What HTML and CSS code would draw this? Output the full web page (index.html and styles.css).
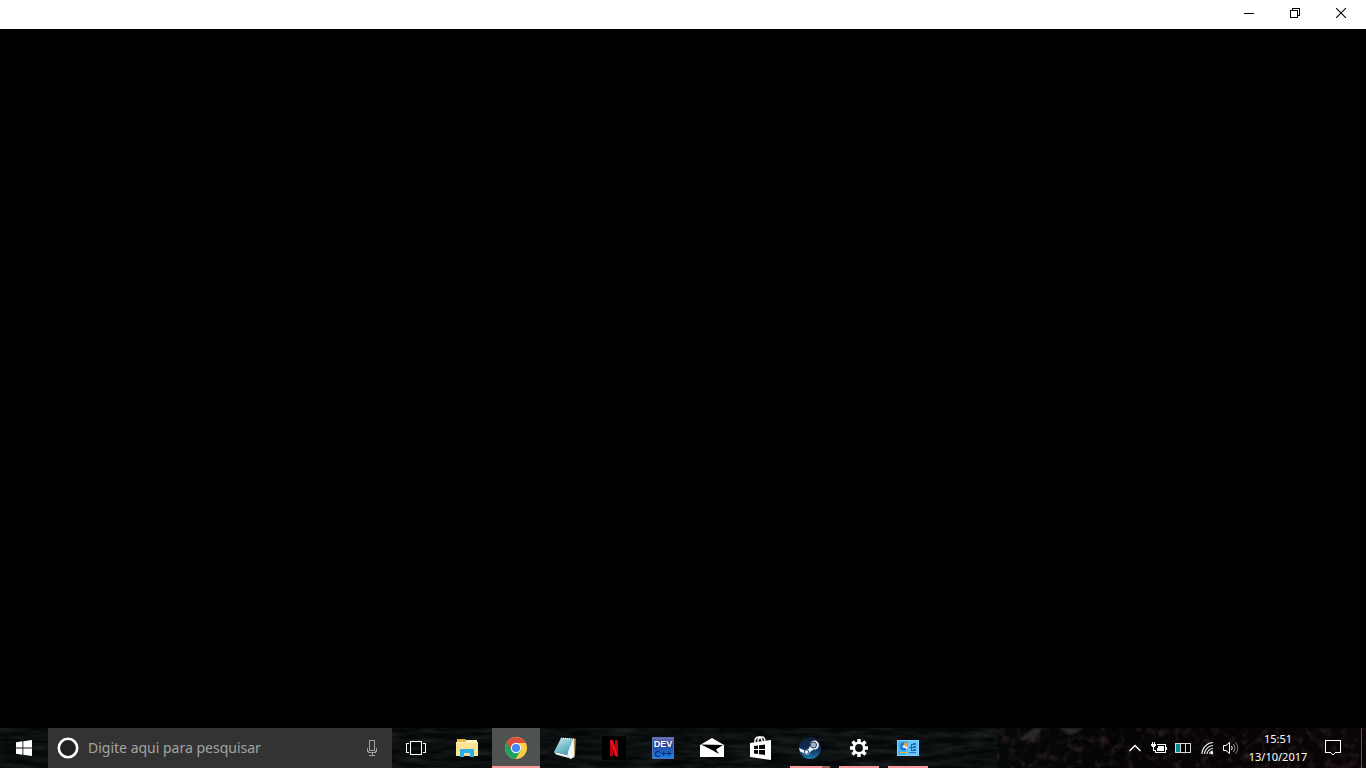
FILE: index.html
```html
<!DOCTYPE html>
<html lang="pt-BR">
<head>
<meta charset="utf-8">
<meta name="viewport" content="width=device-width, initial-scale=1">
<title>Desktop</title>
<link rel="stylesheet" href="styles.css">
</head>
<body>
<header class="titlebar">
  <button class="caption" aria-label="Minimizar"><svg class="px" width="10" height="10" viewBox="0 0 10 10"><path d="M0 5.500H10" stroke="#000"/></svg></button>
  <button class="caption" aria-label="Restaurar"><svg class="px" width="10" height="10" viewBox="0 0 10 10"><path d="M.5 2.500H7.500V9.500H.5ZM2.500 2.500V.5H9.500V7.500H7.500" fill="none" stroke="#000"/></svg></button>
  <button class="caption" aria-label="Fechar"><svg width="10" height="10" viewBox="0 0 10 10"><path d="M0 0L10 10M10 0L0 10" stroke="#000" stroke-width="1.100"/></svg></button>
</header>
<main class="content"></main>
<footer class="taskbar">
  <svg class="texture" width="100%" height="100%" preserveAspectRatio="none" aria-hidden="true">
    <defs>
      <filter id="waves" x="0" y="0" width="100%" height="100%" color-interpolation-filters="sRGB"><feTurbulence type="fractalNoise" baseFrequency=".03 .18" numOctaves="3" seed="4"/><feColorMatrix values="0 0 0 0 .11  0 0 0 0 .13  0 0 0 0 .13  1.800 0 0 0 -.6"/></filter>
      <filter id="leaves" x="0" y="0" width="100%" height="100%" color-interpolation-filters="sRGB"><feTurbulence type="fractalNoise" baseFrequency=".12" numOctaves="3" seed="8"/><feColorMatrix values="0 0 0 0 .2  0 0 0 0 .14  0 0 0 0 .14  2 0 0 0 -1"/></filter>
      <filter id="soft"><feGaussianBlur stdDeviation="1"/></filter>
    </defs>
    <rect width="73%" height="100%" filter="url(#waves)"/>
    <rect x="73%" width="27%" height="100%" filter="url(#leaves)"/>
    <path d="M1020 10L1026 6L1034 0H1042L1039 6L1036 10L1034 16L1029 11L1022 13ZM1058 0H1083L1078 4L1070 7Z" fill="#292727" filter="url(#soft)"/>
  </svg>
  <button class="start" aria-label="Iniciar"><svg width="16" height="16" viewBox="0 0 16 16" fill="#fff"><path d="M0 2.200L6.500 1.300V7.500H0ZM7.300 1.200L16 0V7.500H7.300ZM0 8.400H6.500V14.700L0 13.800ZM7.300 8.400H16V16L7.300 14.800Z"/></svg></button>
  <div class="search">
    <svg width="22" height="22" viewBox="0 0 22 22"><circle cx="11" cy="11" r="9.200" fill="#222" stroke="#fff" stroke-width="2.600"/></svg>
    <input class="query" type="text" aria-label="Pesquisar" placeholder="Digite aqui para pesquisar">
    <button class="mic" aria-label="Microfone"><svg class="px" width="12" height="16" viewBox="0 0 12 16" fill="none" stroke="#a0a0a0"><path d="M3.500.5H8.500V10.500H3.500ZM1.500 8V11.500H2.500V12.500H9.500V11.500H10.500V8M6 12.500V15.500M3 15.500H9"/></svg></button>
  </div>
  <button class="taskview" aria-label="Visão de tarefas"><svg class="px" width="20" height="14" viewBox="0 0 20 14" fill="none" stroke="#fff"><path d="M4.500.5H15.500V13.500H4.500ZM3 2.500H.5V11.500H3M17 2.500H19.500V11.500H17"/></svg></button>
  <nav class="apps">
    <button class="app" aria-label="Explorador de Arquivos"><svg width="22" height="20" viewBox="0 0 22 20"><path d="M1 1H9L11 3H21V7H1Z" fill="#e8bd56"/><path d="M2 1H8V2H2Z" fill="#f8a900"/><path d="M10 2H21V4H10Z" fill="#fff3c4"/><path d="M0 4H22V18H0Z" fill="#fbe394"/><path d="M0 4H22V5H0Z" fill="#fff0b4"/><path d="M4 12Q4 11 5 11H17Q18 11 18 12V19H14V15H8V19H4Z" fill="#2bade8"/><path d="M8 15H14V18H8Z" fill="#f5dca0"/></svg></button>
    <button class="app active" aria-label="Google Chrome"><svg width="22" height="22" viewBox="0 0 22 22"><circle cx="11" cy="11" r="11" fill="#ffcd42"/><path d="M11 11L1.500 5.500A11 11 0 0 0 10.500 22L16 13Z" fill="#1da261"/><path d="M1.500 5.500A11 11 0 0 1 20.600 6H11L6.500 13Z" fill="#de4c3f"/><circle cx="11" cy="11" r="5.200" fill="#f4f4f4"/><circle cx="11" cy="11" r="4.100" fill="#4688f4"/></svg></button>
    <button class="app" aria-label="Bloco de Notas"><svg width="24" height="22" viewBox="0 0 24 22"><defs><linearGradient id="pad" x1=".2" x2=".8" y2="1"><stop stop-color="#c5e5ea"/><stop offset=".5" stop-color="#7cc0cc"/><stop offset="1" stop-color="#3e9bb0"/></linearGradient></defs><path d="M21 1L23 2L22 18L19 21Z" fill="#a87b3c"/><path d="M9 1L21 2L21.500 20L17 22Z" fill="#dfe9eb"/><path d="M8 1L20 2L14 18L1 15Z" fill="url(#pad)"/><path d="M1 15L14 18L18 21.500L3 17.500Z" fill="#eef8fa"/><path d="M20 3L14 18L18 22L21 19Z" fill="#f0f5f6"/><path d="M8 1L21 2" stroke="#fff" stroke-dasharray="1 1"/></svg></button>
    <button class="app" aria-label="Netflix"><svg width="24" height="24" viewBox="0 0 24 24"><path d="M0 0H24V24H0Z" fill="#000"/><path d="M8 4H11V20L8 20.500ZM13 4H16V20.500L13 20Z" fill="#b20710"/><path d="M8 4H11L16 20.500L13 20Z" fill="#f20c18"/></svg></button>
    <button class="app" aria-label="Dev-C++"><svg width="22" height="22" viewBox="0 0 22 22"><defs><linearGradient id="dev" x2="0" y2="1"><stop stop-color="#8984c4"/><stop offset=".25" stop-color="#303f8d"/><stop offset=".5" stop-color="#2552aa"/><stop offset="1" stop-color="#1687f0"/></linearGradient></defs><path d="M0 0H22V22H0Z" fill="url(#dev)"/><path d="M.5.5H21.500V21.500H.5Z" fill="none" stroke="#576db4"/><text class="devtop" x="11" y="10">DEV</text><text class="devlow" x="11" y="20">C++</text></svg></button>
    <button class="app" aria-label="Email"><svg width="24" height="20" viewBox="0 0 24 20"><path d="M0 7L12 0L24 7V19H0Z" fill="#fff"/><path d="M1 6.500L23 7L16 11.500L19 16L12 12Z" fill="#000"/></svg></button>
    <button class="app" aria-label="Loja"><svg width="22" height="24" viewBox="0 0 22 24"><path d="M0 7L21 4V24L0 21Z" fill="#fff"/><path d="M5 7V4Q6 1 9 1Q11 1 12 4V6M8 7V4Q9 1 12 1Q15 1 15 6" fill="none" stroke="#fff" stroke-width="1.400"/><path d="M4 10L8 9.500V13H4ZM9 9.300L15 8.500V13H9ZM4 14H8V18L4 17.500ZM9 14H15V19L9 18.200Z" fill="#050808"/></svg></button>
    <button class="app running grouped" aria-label="Steam"><svg width="22" height="22" viewBox="0 0 22 22"><defs><linearGradient id="steam" x2="0" y2="1"><stop stop-color="#111e35"/><stop offset=".5" stop-color="#102c5b"/><stop offset="1" stop-color="#197cac"/></linearGradient></defs><circle cx="11" cy="11" r="11" fill="url(#steam)"/><path d="M0 11L6 13.500L9.500 12L11 9A4.500 4.500 0 1 1 14.500 12.500L11 15A3.500 3.500 0 0 1 4.500 16L1 14.500Z" fill="#eef1f4"/><circle cx="14.500" cy="8" r="3" fill="#a9b5c4" stroke="#1b3157"/><circle cx="7.500" cy="15" r="2.200" fill="none" stroke="#334c78"/></svg></button>
    <button class="app running" aria-label="Configurações"><svg width="18" height="18" viewBox="0 0 18 18"><g stroke="#fff" stroke-width="3.400"><path d="M9 0V4M9 14V18M0 9H4M14 9H18M2.500 2.500L5 5M13 13L15.500 15.500M15.500 2.500L13 5M5 13L2.500 15.500"/></g><circle cx="9" cy="9" r="5.200" fill="none" stroke="#fff" stroke-width="2.600"/></svg></button>
    <button class="app running" aria-label="Painel de Controle"><svg width="22" height="16" viewBox="0 0 22 16"><path d="M0 0H22V16H0Z" fill="#85d3ff"/><path d="M1 1H21V15H1Z" fill="#43b4f3"/><path d="M11 1H21V15H8Z" fill="#65c5fa"/><circle cx="7" cy="6.500" r="4" fill="#1679ce"/><path d="M7 6.500V2.500A4 4 0 0 1 11 6.500Z" fill="#f59c20"/><path d="M7 6.500H11A4 4 0 0 1 9.500 9.500Z" fill="#e8f6ff"/><circle cx="7" cy="6.500" r="1.500" fill="#d9f0ff"/><path d="M12 7.500H14M14.500 4V11M14 4.500H16M14 7.500H16M14 10.500H16" stroke="#12679f"/><path d="M16 3H19V5H16ZM16 6H19V8H16ZM16 9H19V11H16Z" fill="#1876b6"/><path d="M3 12.500H10" stroke="#ffab20" stroke-width="1"/><path d="M12 12.500H19" stroke="#207ab8"/></svg></button>
  </nav>
  <div class="tray">
    <button class="trayicon" aria-label="Mostrar ícones ocultos"><svg width="12" height="8" viewBox="0 0 12 8"><path d="M.5 7L6 1.500L11.500 7" fill="none" stroke="#fff" stroke-width="1.400"/></svg></button>
    <button class="trayicon" aria-label="Bateria"><svg class="px" width="16" height="12" viewBox="0 0 16 12"><path d="M6 2.500H14.500V10.500H4.500V8M15.500 5V8" fill="none" stroke="#fff"/><path d="M7 4H13V9H6V6H7Z" fill="#fff"/><path d="M1.500 0V2M3.500 0V2M0 2.500H5M0 3.500H5M1 4.500H4M2.500 5V8M2 8.500H5" fill="none" stroke="#fff"/></svg></button>
    <button class="trayicon" aria-label="Monitor de bateria"><svg class="px" width="16" height="10" viewBox="0 0 16 10"><path d="M1 1H5V9H1Z" fill="#008c8c"/><path d="M.5.5H15.500V9.500H.5ZM5.500 1V9M10.500 1V9" fill="none" stroke="#d8d8d8"/></svg></button>
    <button class="trayicon" aria-label="Rede sem fio"><svg width="13" height="14" viewBox="0 0 13 14"><g fill="none" stroke="#e8e8e8" stroke-width="1.200"><path d="M1 13A11.500 11.500 0 0 1 12 1.500"/><path d="M3.500 13A9 9 0 0 1 12 4.500"/><path d="M6 13A6 6 0 0 1 12 7.500"/><path d="M8.500 13A4 4 0 0 1 12 10"/></g><circle cx="11" cy="12" r="1.200" fill="#fff"/></svg></button>
    <button class="trayicon" aria-label="Volume"><svg width="16" height="14" viewBox="0 0 16 14" fill="none"><path d="M.5 4.500H3L6.500 1.500V12.500L3 9.500H.5Z" stroke="#fff"/><path d="M8.500 5Q10 7 8.500 9" stroke="#fff"/><path d="M10.500 3Q13.500 7 10.500 11" stroke="#999"/><path d="M12.500 1Q17 7 12.500 13" stroke="#777"/></svg></button>
    <button class="clock"><time>15:51</time><time>13/10/2017</time></button>
    <button class="notices" aria-label="Central de ações"><svg class="px" width="16" height="16" viewBox="0 0 16 16"><path d="M.5.500H15.500V12.500H10.500L8 15L5.500 12.500H.5Z" fill="none" stroke="#fff"/></svg></button>
    <button class="showdesktop" aria-label="Mostrar área de trabalho"></button>
  </div>
</footer>
</body>
</html>
```

FILE: styles.css
```css
* { box-sizing: border-box; }
body {
  margin: 0;
  min-height: 100vh;
  display: flex;
  flex-direction: column;
  background: #000;
  color: #fff;
  font-family: "Noto Sans", "Open Sans", sans-serif;
}
button {
  display: flex;
  align-items: center;
  justify-content: center;
  padding: 0;
  border: 0;
  background: none;
  color: inherit;
  font: inherit;
}
svg { display: block; flex: none; }
.px { shape-rendering: crispEdges; }

.titlebar {
  display: flex;
  justify-content: flex-end;
  height: 29px;
  padding: 0 2px 3px 0;
  background: #fff;
}
.caption { width: 46px; }
.content { flex: 1; }

.taskbar {
  position: relative;
  display: flex;
  height: 40px;
  background: linear-gradient(90deg, #050808 70%, #060404 85%, #0a0405);
}
.texture { position: absolute; inset: 0; }
.start, .search, .taskview, .apps, .tray { position: relative; }
.start, .taskview { width: 48px; }
.search {
  display: flex;
  align-items: center;
  width: 344px;
  padding: 0 14px 0 9px;
  background: #333;
}
.query {
  flex: 1;
  min-width: 0;
  padding: 0 9px;
  border: 0;
  outline: 0;
  background: none;
  color: #fff;
  font: 14px/20px "Noto Sans", "Open Sans", sans-serif;
}
.query::placeholder { color: #a3a3a3; opacity: 1; }

.apps { display: flex; gap: 1px; margin-left: 3px; }
.app { position: relative; width: 48px; }
.active { background: #505252; }
.active::after, .running::after {
  content: "";
  position: absolute;
  right: 4px;
  bottom: 0;
  left: 4px;
  height: 2px;
  background: #fb9a9d;
}
.active::after { right: 0; left: 0; }
.grouped::after { background: linear-gradient(90deg, #fb9a9d 80%, #a96466 80%); }
.devtop, .devlow {
  font-family: "Liberation Sans", sans-serif;
  font-size: 9px;
  font-weight: 700;
  text-anchor: middle;
  fill: #fff;
}
.devlow { fill: #092b68; }

.tray { display: flex; margin-left: auto; }
.trayicon { width: 24px; }
.clock {
  flex-direction: column;
  width: 70px;
  font: 11px/18px "Noto Sans", sans-serif;
}
.notices { width: 40px; }
.showdesktop {
  width: 5px;
  margin-left: 8px;
  border-left: 1px solid #555;
}
```
